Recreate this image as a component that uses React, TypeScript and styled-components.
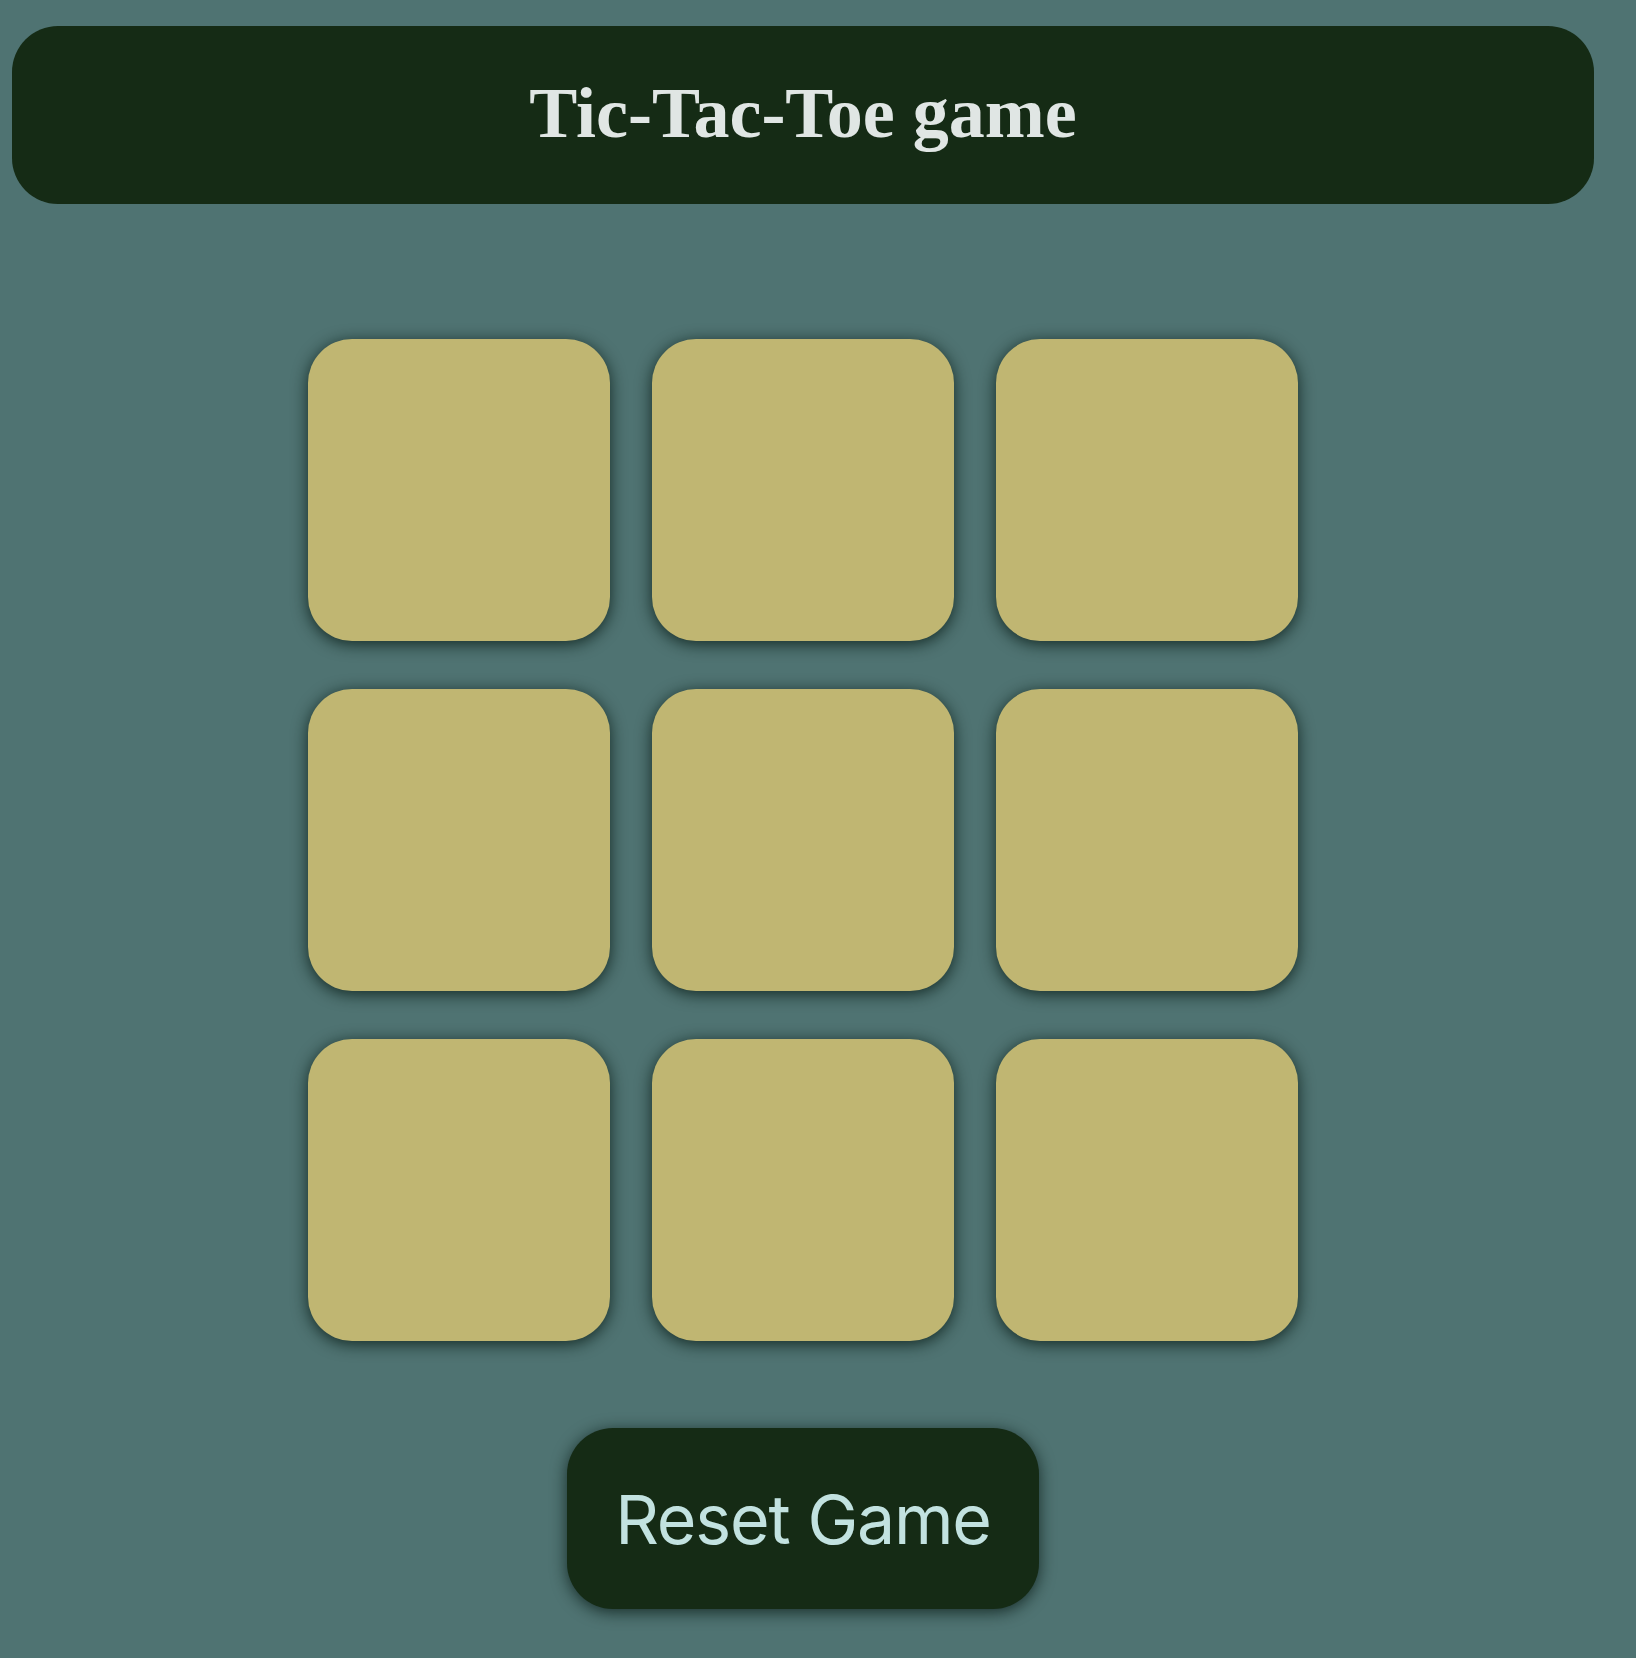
import React from "react";
import styled, { createGlobalStyle } from "styled-components";

const GlobalStyle = createGlobalStyle`
  html, body {
    margin: 0;
    padding: 0;
    background: #4f7372;
  }
  body {
    font-family: "Liberation Serif", serif;
  }
`;

const Page = styled.main`
  box-sizing: border-box;
  min-height: 1658px;
  padding: 26px 42px 49px 12px;
  display: flex;
  flex-direction: column;
  align-items: center;
  background: #4f7372;
`;

const Header = styled.header`
  box-sizing: border-box;
  width: 100%;
  height: 178px;
  border-radius: 46px;
  background: #152b15;
  display: flex;
  align-items: center;
  justify-content: center;
`;

const Title = styled.h1`
  margin: 0;
  font-family: "Liberation Serif", "Times New Roman", serif;
  font-weight: 700;
  font-size: 72px;
  line-height: 1;
  color: #e0e6e4;
  transform: translateY(-2px);
`;

const Board = styled.section`
  margin-top: 135px;
  display: grid;
  grid-template-columns: repeat(3, 302px);
  grid-auto-rows: 302px;
  column-gap: 42px;
  row-gap: 48px;
`;

const Cell = styled.button`
  border: none;
  padding: 0;
  border-radius: 44px;
  background: #c0b672;
  box-shadow: 0 3px 16px rgba(5, 22, 16, 0.8);
  cursor: pointer;
`;

const ResetButton = styled.button`
  margin-top: 87px;
  width: 472px;
  height: 181px;
  border: none;
  border-radius: 46px;
  background: #152b15;
  color: #c2e2e0;
  font-family: Inter, "Liberation Sans", sans-serif;
  font-weight: 400;
  font-size: 68px;
  letter-spacing: -1.2px;
  box-shadow: 0 3px 16px rgba(5, 22, 16, 0.75);
  cursor: pointer;
`;

export default function App() {
  const cells = Array.from({ length: 9 }, (_, i) => i);
  return (
    <>
      <GlobalStyle />
      <Page>
        <Header>
          <Title>Tic-Tac-Toe game</Title>
        </Header>
        <Board>
          {cells.map((i) => (
            <Cell key={i} aria-label={`cell ${i + 1}`} />
          ))}
        </Board>
        <ResetButton>Reset Game</ResetButton>
      </Page>
    </>
  );
}
